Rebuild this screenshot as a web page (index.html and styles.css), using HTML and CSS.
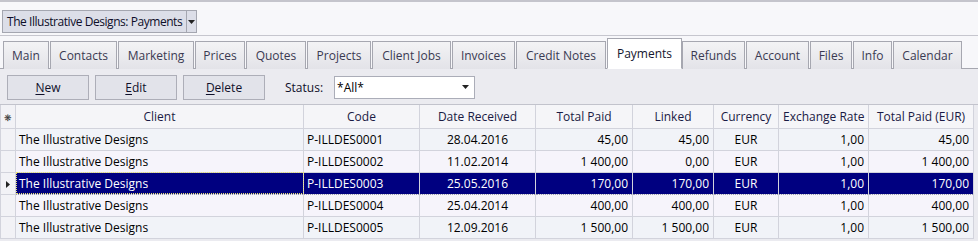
FILE: index.html
```html
<!DOCTYPE html>
<html>
<head>
<meta charset="utf-8">
<link rel="stylesheet" href="styles.css">
</head>
<body>
<div class="app">
  <div class="topbar">
    <div class="combo">
      <span class="combo-text">The Illustrative Designs: Payments</span>
      <span class="combo-btn"><svg width="7" height="4" viewBox="0 0 7 4"><path d="M0 0h7L3.5 4z" fill="#222"/></svg></span>
    </div>
  </div>
  <div class="tabs">
    <div class="tab t-main">Main</div>
    <div class="tab t-contacts">Contacts</div>
    <div class="tab t-marketing">Marketing</div>
    <div class="tab t-prices">Prices</div>
    <div class="tab t-quotes">Quotes</div>
    <div class="tab t-projects">Projects</div>
    <div class="tab t-jobs">Client Jobs</div>
    <div class="tab t-invoices">Invoices</div>
    <div class="tab t-credit">Credit Notes</div>
    <div class="tab t-payments active">Payments</div>
    <div class="tab t-refunds">Refunds</div>
    <div class="tab t-account">Account</div>
    <div class="tab t-files">Files</div>
    <div class="tab t-info">Info</div>
    <div class="tab t-calendar">Calendar</div>
  </div>
  <div class="toolbar">
    <button class="btn"><u>N</u>ew</button>
    <button class="btn"><u>E</u>dit</button>
    <button class="btn"><u>D</u>elete</button>
    <span class="status-label">Status:</span>
    <div class="select">
      <span>*All*</span>
      <svg width="7" height="4" viewBox="0 0 7 4"><path d="M0 0h7L3.5 4z" fill="#222"/></svg>
    </div>
  </div>
  <div class="grid-wrap">
    <table class="grid">
      <colgroup>
        <col class="c-ind"><col class="c-client"><col class="c-code"><col class="c-date"><col class="c-paid"><col class="c-linked"><col class="c-cur"><col class="c-rate"><col class="c-eur">
      </colgroup>
      <thead>
        <tr>
          <th class="ind"><span class="star">&#x274B;</span></th>
          <th>Client</th><th>Code</th><th>Date Received</th><th>Total Paid</th><th>Linked</th><th>Currency</th><th>Exchange Rate</th><th>Total Paid (EUR)</th>
        </tr>
      </thead>
      <tbody>
        <tr class="odd">
          <td class="ind"></td><td class="l">The Illustrative Designs</td><td class="l">P-ILLDES0001</td><td class="c">28.04.2016</td><td class="r">45,00</td><td class="r">45,00</td><td class="c">EUR</td><td class="r">1,00</td><td class="r">45,00</td>
        </tr>
        <tr class="even">
          <td class="ind"></td><td class="l">The Illustrative Designs</td><td class="l">P-ILLDES0002</td><td class="c">11.02.2014</td><td class="r">1 400,00</td><td class="r">0,00</td><td class="c">EUR</td><td class="r">1,00</td><td class="r">1 400,00</td>
        </tr>
        <tr class="sel">
          <td class="ind"><svg width="4" height="7" viewBox="0 0 4 7"><path d="M0 0v7l4-3.5z" fill="#222"/></svg></td><td class="l focus">The Illustrative Designs</td><td class="l">P-ILLDES0003</td><td class="c">25.05.2016</td><td class="r">170,00</td><td class="r">170,00</td><td class="c">EUR</td><td class="r">1,00</td><td class="r">170,00</td>
        </tr>
        <tr class="even">
          <td class="ind"></td><td class="l">The Illustrative Designs</td><td class="l">P-ILLDES0004</td><td class="c">25.04.2014</td><td class="r">400,00</td><td class="r">400,00</td><td class="c">EUR</td><td class="r">1,00</td><td class="r">400,00</td>
        </tr>
        <tr class="odd">
          <td class="ind"></td><td class="l">The Illustrative Designs</td><td class="l">P-ILLDES0005</td><td class="c">12.09.2016</td><td class="r">1 500,00</td><td class="r">1 500,00</td><td class="c">EUR</td><td class="r">1,00</td><td class="r">1 500,00</td>
        </tr>
      </tbody>
    </table>
  </div>
</div>
</body>
</html>
```

FILE: styles.css
```css
* { box-sizing: border-box; }
html, body { margin: 0; padding: 0; }
body {
  width: 978px;
  height: 241px;
  overflow: hidden;
  background: #ebebf0;
  font-family: "Open Sans", "Noto Sans", sans-serif;
  font-size: 12px;
  color: #000;
}
.app { display: flex; flex-direction: column; }

.topbar {
  height: 36px;
  background: #f7f7fa;
  border-top: 2px solid #c4c4cc;
  border-bottom: 1px solid #c6c6ce;
  padding: 8px 0 0 2px;
}
.combo {
  display: flex;
  width: 195px;
  height: 23px;
  border: 1px solid #a4a6b0;
  background: #dcdee8;
}
.combo-text {
  flex: 1;
  padding: 1px 0 0 4px;
  color: #0e0e2a;
  line-height: 19px;
  letter-spacing: -0.45px;
  white-space: nowrap;
  overflow: hidden;
}
.combo-btn {
  width: 10px;
  border-left: 1px solid #a4a6b0;
  display: flex;
  align-items: center;
  justify-content: center;
}

.tabs {
  display: flex;
  align-items: flex-end;
  height: 33px;
  padding-left: 3px;
  background: #f7f7fa;
  border-bottom: 1px solid #a6a7b0;
}
.tab {
  height: 28px;
  margin-bottom: -1px;
  margin-right: 1px;
  border: 1px solid #a6a7b0;
  border-bottom: none;
  background: linear-gradient(#f3f3f5, #e3e3e8);
  color: #3a3a52;
  display: flex;
  align-items: center;
  justify-content: center;
  white-space: nowrap;
}
.tab.active {
  height: 31px;
  background: #fff;
  color: #14142e;
  border-bottom: 1px solid #fff;
  margin-right: 0;
}
.t-main { width: 46px; }
.t-contacts { width: 67px; }
.t-marketing { width: 76px; }
.t-prices { width: 50px; }
.t-quotes { width: 60px; }
.t-projects { width: 64px; }
.t-jobs { width: 79px; }
.t-invoices { width: 63px; }
.t-credit { width: 90px; }
.t-payments { width: 75px; }
.t-refunds { width: 63px; }
.t-account { width: 63px; }
.t-files { width: 42px; }
.t-info { width: 39px; }
.t-calendar { width: 69px; }

.toolbar {
  display: flex;
  align-items: center;
  height: 35px;
  padding: 1px 0 0 7px;
  background: #ebebf0;
}
.btn {
  width: 82px;
  height: 25px;
  margin-right: 6px;
  border: 1px solid #adaeb8;
  background: #e2e3ea;
  font-family: inherit;
  font-size: 12px;
  color: #10102a;
  padding: 0;
}
.btn u { text-decoration-thickness: 1px; text-underline-offset: 2px; }
.status-label {
  margin-left: 14px;
  color: #10102a;
}
.select {
  margin-left: 11px;
  width: 141px;
  height: 23px;
  background: #fff;
  border: 1px solid #abadb8;
  display: flex;
  align-items: center;
  justify-content: space-between;
  padding: 0 5px 0 2px;
}

.grid-wrap {
  border-top: 1px solid #c2c3cc;
  background: #ebebf0;
}
.grid {
  border-collapse: collapse;
  table-layout: fixed;
  width: 973px;
}
.c-ind { width: 15px; }
.c-client { width: 288px; }
.c-code { width: 116px; }
.c-date { width: 116px; }
.c-paid { width: 97px; }
.c-linked { width: 81px; }
.c-cur { width: 65px; }
.c-rate { width: 90px; }
.c-eur { width: 105px; }

.grid th, .grid td {
  border: 1px solid #d2d3dc;
  border-top: none;
  height: 22px;
  padding: 0 4px;
  white-space: nowrap;
  overflow: hidden;
}
.grid th {
  height: 23px;
  font-weight: normal;
  background: #f5f5f8;
  color: #1a1a44;
  text-align: center;
}
.grid .ind {
  padding: 0;
  background: #f2f2f6;
  text-align: center;
}
.star { font-size: 9px; color: #333; }
.grid td.l { text-align: left; padding-left: 3px; }
.grid td.c { text-align: center; }
.grid td.r { text-align: right; padding-right: 4px; }
.odd td { background: #f1f3f8; }
.even td { background: #f6f4fb; }
.odd td.ind, .even td.ind, .sel td.ind { background: #f2f2f6; }
.sel td {
  background: #000080;
  color: #fff;
  border-top: 1px dotted #9a9ab0;
  border-bottom: 1px dotted #9a9ab0;
}
.sel td.focus { outline: 1px dotted #e8e070; outline-offset: -1px; }
.sel td.ind { border-top: none; border-bottom: 1px solid #d2d3dc; }
```
